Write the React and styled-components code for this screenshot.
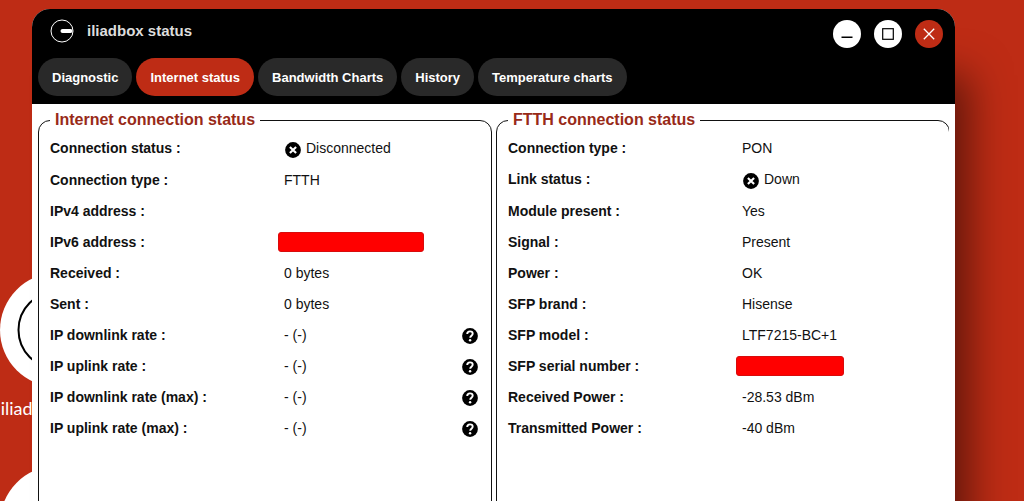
import styled, { createGlobalStyle } from "styled-components";

const GlobalStyle = createGlobalStyle`
  * {
    box-sizing: border-box;
  }
  body {
    margin: 0;
    font-family: "Liberation Sans", Arial, sans-serif;
    font-size: 14px;
    color: #111;
  }
`;

const Desktop = styled.div`
  position: relative;
  height: 100vh;
  overflow: hidden;
  padding: 9px 69px 0 32px;
  background-color: #be2c15;
`;

// desktop shortcuts, partly hidden behind the window
const Shortcuts = styled.nav`
  position: absolute;
  top: 273px;
  left: 0;
  width: 114px;
  display: flex;
  flex-direction: column;
  gap: 47px;
`;

const Shortcut = styled.a`
  display: flex;
  flex-direction: column;
  align-items: center;
  gap: 10px;
  font-family: Lato, sans-serif;
  font-size: 18px;
  line-height: 22px;
  white-space: nowrap;
  text-decoration: none;
  color: #fff;
`;

const ShortcutDisc = styled.span`
  display: flex;
  align-items: center;
  justify-content: center;
  width: 114px;
  height: 114px;
  border-radius: 50%;
  background-color: #fff;
`;

const Window = styled.main`
  position: relative;
  display: flex;
  flex-direction: column;
  min-height: 120vh;
  border-radius: 18px;
  overflow: hidden;
  background-color: #fff;
  box-shadow: 30px 50px 40px -16px rgba(0, 0, 0, 0.5);
`;

const Header = styled.header`
  padding-bottom: 8px;
  background-color: #000;
`;

const TitleBar = styled.div`
  display: flex;
  align-items: flex-start;
  justify-content: space-between;
  padding: 11px 12px 10px 18px;
`;

const TitleGroup = styled.div`
  display: flex;
  align-items: center;
  gap: 13px;
  height: 22px;
`;

const Title = styled.h1`
  margin: 0;
  font-size: 15px;
  line-height: 24px;
  color: #ddd;
`;

const WindowButtons = styled.div`
  display: flex;
  gap: 13px;
`;

const WindowButton = styled.button`
  display: flex;
  align-items: center;
  justify-content: center;
  width: 28px;
  height: 28px;
  padding: 0;
  border: 0;
  border-radius: 50%;
  color: ${(props) => (props.$close ? "#fff" : "#000")};
  background-color: ${(props) => (props.$close ? "#be2c15" : "#fff")};
`;

const Tabs = styled.nav`
  display: flex;
  gap: 4px;
  padding: 0 6px;
`;

const Tab = styled.button`
  height: 38px;
  padding: 0 14px;
  border: 0;
  border-radius: 19px;
  font-family: inherit;
  font-size: 13px;
  font-weight: bold;
  color: #fff;
  background-color: ${(props) => (props.$active ? "#be2c15" : "#292929")};
`;

const Content = styled.div`
  flex: 1;
  display: flex;
  margin: 0 6px;
  padding-top: 7px;
  overflow: hidden;
`;

const Panels = styled.div`
  flex: 1;
  display: grid;
  grid-template-columns: 1fr 1fr;
  gap: 4px;
  margin-right: -1px;
`;

const Panel = styled.fieldset`
  min-width: 0;
  margin: 0;
  padding: 3px 13px 0 11px;
  border: 1px solid #111;
  border-radius: 12px;
`;

const Legend = styled.legend`
  padding: 0 5px;
  font-size: 16px;
  font-weight: bold;
  line-height: 18px;
  color: #982a18;
`;

const List = styled.dl`
  margin: 0;
`;

const Row = styled.div`
  display: flex;
  align-items: center;
  height: ${(props) => (props.$tall ? 32 : 31)}px;
`;

const Term = styled.dt`
  flex: 0 0 234px;
  font-weight: bold;
`;

const Value = styled.dd`
  flex: 1;
  display: flex;
  align-items: center;
  gap: 5px;
  margin: 0;
`;

const Redacted = styled.span`
  width: ${(props) => props.$width}px;
  height: 20px;
  margin-left: -6px;
  border: 1px solid #d80c0c;
  border-radius: 3px;
  background-color: #f00;
`;

const HelpButton = styled.button`
  display: flex;
  padding: 3px 0 0;
  border: 0;
  background: none;
`;

const StatusIcon = styled.span`
  display: flex;
  padding: 3px 0 0 1px;
`;

const CrossDisc = () => (
  <svg width="16" height="16" viewBox="0 0 16 16" aria-hidden>
    <circle cx="8" cy="8" r="7.9" fill="#000" />
    <path d="M4.9 4.9l6.2 6.2M11.1 4.9l-6.2 6.2" stroke="#fff" strokeWidth="2.1" />
  </svg>
);

const HelpDisc = () => (
  <svg width="16" height="16" viewBox="0 0 16 16" aria-hidden>
    <circle cx="8" cy="8" r="7.9" fill="#000" />
    <path
      d="M5.2 6C5.2 4.3 6.4 3.4 8 3.4s2.7.9 2.7 2.3c0 1.9-2.5 2-2.5 4"
      fill="none"
      stroke="#fff"
      strokeWidth="1.9"
    />
    <circle cx="8.1" cy="12.2" r="1.2" fill="#fff" />
  </svg>
);

const internetRows = [
  { term: "Connection status :", value: "Disconnected", down: true },
  { term: "Connection type :", value: "FTTH" },
  { term: "IPv4 address :", value: "" },
  { term: "IPv6 address :", redacted: 146 },
  { term: "Received :", value: "0 bytes" },
  { term: "Sent :", value: "0 bytes" },
  { term: "IP downlink rate :", value: "- (-)", help: true },
  { term: "IP uplink rate :", value: "- (-)", help: true },
  { term: "IP downlink rate (max) :", value: "- (-)", help: true },
  { term: "IP uplink rate (max) :", value: "- (-)", help: true },
];

const ftthRows = [
  { term: "Connection type :", value: "PON" },
  { term: "Link status :", value: "Down", down: true },
  { term: "Module present :", value: "Yes" },
  { term: "Signal :", value: "Present" },
  { term: "Power :", value: "OK" },
  { term: "SFP brand :", value: "Hisense" },
  { term: "SFP model :", value: "LTF7215-BC+1" },
  { term: "SFP serial number :", redacted: 108 },
  { term: "Received Power :", value: "-28.53 dBm" },
  { term: "Transmitted Power :", value: "-40 dBm" },
];

const tabs = [
  "Diagnostic",
  "Internet status",
  "Bandwidth Charts",
  "History",
  "Temperature charts",
];

function StatusPanel({ title, rows }) {
  return (
    <Panel>
      <Legend>{title}</Legend>
      <List>
        {rows.map((row) => (
          <Row key={row.term} $tall={row.down}>
            <Term>{row.term}</Term>
            <Value>
              {row.down && (
                <StatusIcon>
                  <CrossDisc />
                </StatusIcon>
              )}
              {row.redacted ? <Redacted $width={row.redacted} /> : row.value}
            </Value>
            {row.help && (
              <HelpButton type="button" aria-label={`Help: ${row.term}`}>
                <HelpDisc />
              </HelpButton>
            )}
          </Row>
        ))}
      </List>
    </Panel>
  );
}

export default function App() {
  return (
    <>
      <GlobalStyle />
      <Desktop>
        <Shortcuts>
          <Shortcut href="#status">
            <ShortcutDisc>
              <svg width="80" height="80" viewBox="0 0 80 80" aria-hidden>
                <circle cx="40" cy="40" r="38.5" fill="none" stroke="#000" strokeWidth="2" />
              </svg>
            </ShortcutDisc>
            iliadbox status
          </Shortcut>
          <Shortcut href="#settings" aria-label="Settings">
            <ShortcutDisc />
          </Shortcut>
        </Shortcuts>
        <Window>
          <Header>
            <TitleBar>
              <TitleGroup>
                <svg width="24" height="24" viewBox="0 0 24 24" aria-hidden>
                  <circle cx="12" cy="12" r="11" fill="none" stroke="#fff" />
                  <path d="M12.5 12h8" stroke="#fff" strokeWidth="4" strokeLinecap="round" />
                </svg>
                <Title>iliadbox status</Title>
              </TitleGroup>
              <WindowButtons>
                <WindowButton type="button" aria-label="Minimize">
                  <svg width="12" height="12" viewBox="0 0 12 12" aria-hidden>
                    <path d="M0.5 9.2h11" stroke="currentColor" strokeWidth="1.4" />
                  </svg>
                </WindowButton>
                <WindowButton type="button" aria-label="Maximize">
                  <svg width="12" height="12" viewBox="0 0 12 12" aria-hidden>
                    <rect x="0.7" y="0.7" width="10.6" height="10.6" fill="none" stroke="currentColor" strokeWidth="1.2" />
                  </svg>
                </WindowButton>
                <WindowButton type="button" aria-label="Close" $close>
                  <svg width="12" height="12" viewBox="0 0 12 12" aria-hidden>
                    <path d="M0.8 0.8l10.4 10.4M11.2 0.8L0.8 11.2" stroke="currentColor" strokeWidth="1.3" />
                  </svg>
                </WindowButton>
              </WindowButtons>
            </TitleBar>
            <Tabs>
              {tabs.map((tab) => (
                <Tab key={tab} type="button" $active={tab === "Internet status"}>
                  {tab}
                </Tab>
              ))}
            </Tabs>
          </Header>
          <Content>
            <Panels>
              <StatusPanel title="Internet connection status" rows={internetRows} />
              <StatusPanel title="FTTH connection status" rows={ftthRows} />
            </Panels>
          </Content>
        </Window>
      </Desktop>
    </>
  );
}
